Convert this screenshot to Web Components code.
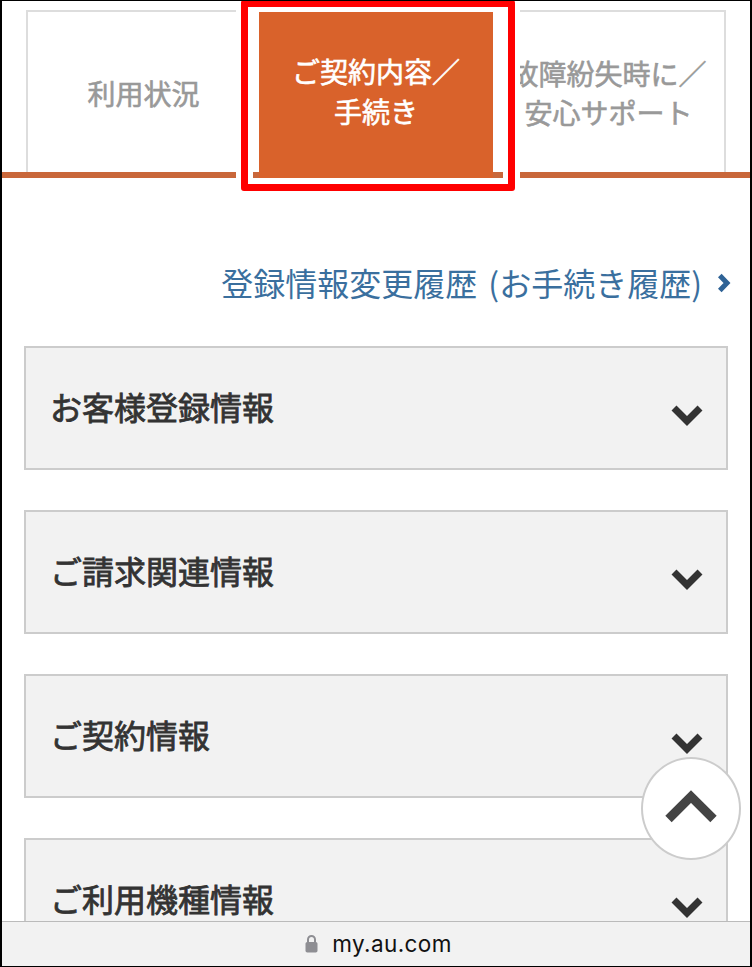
<!DOCTYPE html>
<html lang="ja">
<head>
<meta charset="utf-8">
<title>my au</title>
<style>
	html, body { margin: 0; background: #fff; }
	body { font-family: "Noto Sans CJK JP", sans-serif; }
</style>
</head>
<body>

<au-page>
	<au-tabs>
		<au-tab>利用状況</au-tab>
		<au-tab active>ご契約内容／<br>手続き</au-tab>
		<au-tab last>故障紛失時に／<br>安心サポート</au-tab>
	</au-tabs>
	<au-history-link>登録情報変更履歴 (お手続き履歴)</au-history-link>
	<au-accordion>お客様登録情報</au-accordion>
	<au-accordion>ご請求関連情報</au-accordion>
	<au-accordion>ご契約情報</au-accordion>
	<au-accordion>ご利用機種情報</au-accordion>
</au-page>

<script>
	// small helper, every element just sets its shadow markup once
	class ShadowElement extends HTMLElement {
		constructor() {
			super();
			this.attachShadow({ mode: 'open' });
			this.shadowRoot.innerHTML = this.constructor.markup;
		}
	}

	class AuPage extends ShadowElement {
		static markup = `
			<style>
				:host { display: flex; flex-direction: column; width: 752px; height: 967px; box-sizing: border-box; border: solid #000; border-width: 1px 2px; position: relative; overflow: hidden; background: #fff; }
				.content { flex: 1; min-height: 0; overflow: hidden; }
			</style>
			<div class="content"><slot></slot></div>
			<au-address-bar></au-address-bar>
			<au-scroll-top></au-scroll-top>`;
	}

	class AuTabs extends ShadowElement {
		static markup = `
			<style>
				:host { display: block; position: relative; height: 177px; }
				.row { display: grid; grid-template-columns: 233px 234px 233px; align-items: start; padding: 9px 0 0 24px; height: 162px; border-bottom: 6px solid #c9673a; }
				/* red marker drawn over the active tab of the screenshot */
				.marker { position: absolute; left: 239px; top: -1px; width: 274px; height: 191px; box-sizing: border-box; border: 7px solid #f00; border-radius: 3px; box-shadow: 0 0 0 5px #fff, inset 0 0 0 5px #fff; pointer-events: none; }
			</style>
			<div class="row"><slot></slot></div>
			<div class="marker"></div>`;
	}

	class AuTab extends ShadowElement {
		static markup = `
			<style>
				:host { display: flex; align-items: center; justify-content: center; box-sizing: border-box; height: 162px; padding-top: 4px; border-top: 2px solid #ddd; border-left: 2px solid #ddd; color: #999; font: 400 28px/39.500px "Noto Sans CJK JP", sans-serif; -webkit-text-stroke: .6px currentColor; text-align: center; }
				/* the active tab runs down over the orange rule */
				:host([active]) { position: relative; margin-top: 2px; height: 166px; border: 0; padding-top: 0; padding-bottom: 7px; background: #d9622b; color: #fff; }
				:host([last]) { border-left: 0; border-right: 2px solid #ddd; padding-top: 2px; }
			</style>
			<div><slot></slot></div>`;
	}

	class AuHistoryLink extends ShadowElement {
		static markup = `
			<style>
				:host { display: flex; justify-content: flex-end; align-items: center; gap: 15px; height: 44px; margin: 85px 19px 39px 0; color: #3a6f9e; font: 400 32px/44px "Noto Sans CJK JP", sans-serif; word-spacing: 4px; white-space: nowrap; }
				span { position: relative; top: -3px; }
				svg { width: 14px; height: 20px; flex: none; position: relative; top: -2px; }
			</style>
			<span><slot></slot></span>
			<svg viewBox="0 0 14 20"><path d="M2.800 2.500 10 10 2.800 17.500" fill="none" stroke="#2f6396" stroke-width="5"/></svg>`;
	}

	class AuAccordion extends ShadowElement {
		static markup = `
			<style>
				:host { display: flex; justify-content: space-between; align-items: center; box-sizing: border-box; width: 704px; height: 124px; margin: 0 0 40px 22px; padding: 0 23px 0 24px; border: 2px solid #ccc; background: #f2f2f2; color: #333; font: 400 32px/44px "Noto Sans CJK JP", sans-serif; -webkit-text-stroke: .8px currentColor; }
				span { padding-bottom: 5px; }
				svg { width: 32px; height: 22px; flex: none; margin-top: 13px; }
			</style>
			<span><slot></slot></span>
			<svg viewBox="0 0 32 22"><path d="M3 4 16 17 29 4" fill="none" stroke="#333" stroke-width="7"/></svg>`;
	}

	class AuScrollTop extends ShadowElement {
		static markup = `
			<style>
				:host { position: absolute; left: 639px; top: 756px; width: 100px; height: 103px; box-sizing: border-box; display: flex; align-items: center; justify-content: center; border: 2px solid #ccc; border-radius: 50%; background: #fff; }
				svg { width: 54px; height: 36px; margin-bottom: 6px; }
			</style>
			<svg viewBox="0 0 54 36"><path d="M4.500 31 27 8.500 49.500 31" fill="none" stroke="#444" stroke-width="9"/></svg>`;
	}

	class AuAddressBar extends ShadowElement {
		static markup = `
			<style>
				:host { display: flex; align-items: center; justify-content: center; gap: 14px; flex: none; height: 45px; box-sizing: border-box; border-top: 1px solid #bbb; padding-left: 5px; background: #f2f2f2; color: #111; font: 400 22.500px/44px Inter, sans-serif; letter-spacing: .4px; }
				svg { width: 13px; height: 19px; margin-top: -1px; }
			</style>
			<svg viewBox="0 0 13 19"><path d="M3 8.500V5.500a3.500 3.500 0 0 1 7 0V8.500" fill="none" stroke="#8e8e93" stroke-width="2"/><rect x="0.500" y="8" width="12" height="10.500" rx="1.800" fill="#8e8e93"/></svg>
			<span>my.au.com</span>`;
	}

	customElements.define('au-page', AuPage);
	customElements.define('au-tabs', AuTabs);
	customElements.define('au-tab', AuTab);
	customElements.define('au-history-link', AuHistoryLink);
	customElements.define('au-accordion', AuAccordion);
	customElements.define('au-scroll-top', AuScrollTop);
	customElements.define('au-address-bar', AuAddressBar);
</script>

</body>
</html>
